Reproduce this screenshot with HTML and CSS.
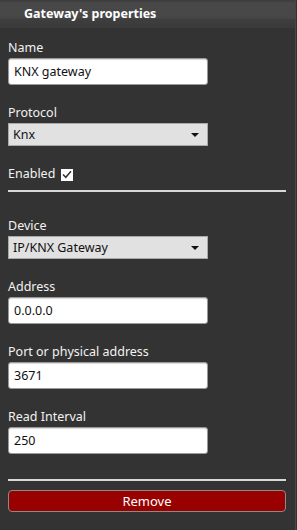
FILE: index.html
```html
<!DOCTYPE html>
<html lang="en">
<head>
  <meta charset="UTF-8">
  <meta name="viewport" content="width=device-width, initial-scale=1.0">
  <title>Gateway's properties</title>
  <link rel="stylesheet" href="styles.css">
</head>
<body>
  <div class="panel">
    <div class="header">Gateway's properties</div>

    <div class="content">
      <div class="field">
        <label for="name">Name</label>
        <input id="name" class="text-input" type="text" value="KNX gateway">
      </div>

      <div class="field">
        <label>Protocol</label>
        <div class="select">
          <span>Knx</span>
          <span class="arrow"></span>
        </div>
      </div>

      <div class="check-row">
        <span>Enabled</span>
        <span class="checkbox">
          <svg width="10" height="9" viewBox="0 0 10 9">
            <path d="M1 4.5 L3.8 7.3 L9 1.3" fill="none" stroke="#333" stroke-width="1.5"/>
          </svg>
        </span>
      </div>

      <hr class="divider">

      <div class="field">
        <label>Device</label>
        <div class="select">
          <span>IP/KNX Gateway</span>
          <span class="arrow"></span>
        </div>
      </div>

      <div class="field">
        <label for="address">Address</label>
        <input id="address" class="text-input" type="text" value="0.0.0.0">
      </div>

      <div class="field">
        <label for="port">Port or physical address</label>
        <input id="port" class="text-input" type="text" value="3671">
      </div>

      <div class="field">
        <label for="interval">Read Interval</label>
        <input id="interval" class="text-input" type="text" value="250">
      </div>

      <hr class="divider bottom">

      <button class="btn-remove">Remove</button>
    </div>
  </div>
</body>
</html>
```

FILE: styles.css
```css
body {
  margin: 0;
  background-color: #333333;
  font-family: 'Noto Sans', 'Open Sans', sans-serif;
  font-size: 12.5px;
  color: #f2f2f2;
}

.panel {
  width: 295px;
  height: 530px;
  border-right: 1px solid #474747;
}

.header {
  height: 28px;
  line-height: 27px;
  padding-left: 24px;
  font-weight: bold;
  font-size: 12.5px;
  color: #fff;
  background: linear-gradient(to bottom, #3b3b3b 0px, #484848 3px, #474747 18px, #3e3e3e 19px, #3a3a3a 28px);
}

.content {
  display: flex;
  flex-direction: column;
  padding: 11px 9px 0 8px;
}

.field {
  margin-bottom: 19px;
}

.field label {
  display: block;
  line-height: 18px;
  margin-bottom: 1px;
}

.text-input {
  display: block;
  box-sizing: border-box;
  width: 200px;
  height: 27px;
  margin: 0;
  padding: 0 5px;
  border: 1px solid #9a9a9a;
  border-radius: 3px;
  box-shadow: inset 0 1px 1px rgba(0, 0, 0, 0.15);
  background-color: #fff;
  font-family: inherit;
  font-size: 12.5px;
  color: #111;
}

.select {
  box-sizing: border-box;
  width: 200px;
  height: 23px;
  padding: 0 8px 0 4px;
  border: 1px solid #a9a9a9;
  background-color: #e1e1e1;
  color: #111;
  display: flex;
  align-items: center;
  justify-content: space-between;
}

.arrow {
  width: 0;
  height: 0;
  border-left: 4px solid transparent;
  border-right: 4px solid transparent;
  border-top: 4px solid #111;
}

.check-row {
  display: flex;
  align-items: center;
  gap: 6px;
  line-height: 18px;
}

.checkbox {
  width: 12px;
  height: 12px;
  background-color: #fff;
  display: flex;
  align-items: center;
  justify-content: center;
  margin-top: 1px;
}

.divider {
  width: 100%;
  border: none;
  height: 2px;
  background-color: #d8d8d8;
  margin: 7px 0 25px;
}

.divider.bottom {
  margin: 6px 0 9px;
}

.btn-remove {
  display: block;
  width: 100%;
  height: 22px;
  padding: 0;
  border: 1px solid #8a8a8a;
  border-radius: 4px;
  background-color: #990000;
  color: #fff;
  font-family: inherit;
  font-size: 13px;
  cursor: pointer;
}
```
